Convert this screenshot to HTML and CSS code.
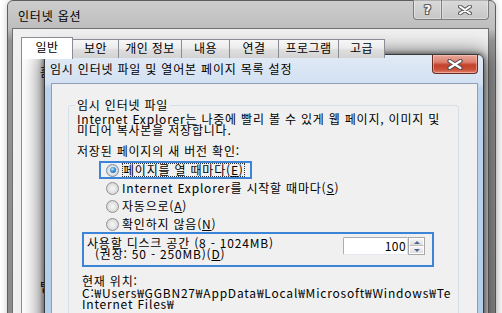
FILE: index.html
```html
<!DOCTYPE html>
<html lang="ko">
<head>
<meta charset="utf-8">
<title>인터넷 옵션</title>
<link rel="stylesheet" href="styles.css">
</head>
<body>
<div class="desk">
  <div class="win outer">
    <div class="titlebar">
      <span class="title">인터넷 옵션</span>
      <div class="caps">
        <div class="cap help"><span class="qmark">?</span></div>
        <div class="cap close">
          <svg width="14" height="10" viewBox="0 0 14 10"><path d="M2 1.5 L12 8.5 M12 1.5 L2 8.5" stroke="#5f5f5f" stroke-width="4" stroke-linecap="round"/><path d="M2 1.5 L12 8.5 M12 1.5 L2 8.5" stroke="#fff" stroke-width="2" stroke-linecap="round"/></svg>
        </div>
      </div>
    </div>
    <div class="client">
      <div class="tabs">
        <div class="tab sel">일반</div>
        <div class="tab">보안</div>
        <div class="tab">개인 정보</div>
        <div class="tab">내용</div>
        <div class="tab">연결</div>
        <div class="tab">프로그램</div>
        <div class="tab">고급</div>
      </div>
      <div class="page">
        <div class="ghost g1">홈</div>
        <div class="ghost g2">탭</div>
      </div>
    </div>
  </div>

  <div class="win dlg">
    <div class="dtitle">
      <span class="dtext">임시 인터넷 파일 및 열어본 페이지 목록 설정</span>
      <div class="dclose">
        <svg width="16" height="11" viewBox="0 0 16 11"><path d="M2.5 2 L13.5 9 M13.5 2 L2.5 9" stroke="#4a4a4a" stroke-width="4.2" stroke-linecap="round"/><path d="M2.5 2 L13.5 9 M13.5 2 L2.5 9" stroke="#fff" stroke-width="2.2" stroke-linecap="round"/></svg>
      </div>
    </div>
    <div class="dclient">
      <fieldset class="group">
        <legend>임시 인터넷 파일</legend>
        <p class="desc">Internet Explorer는 나중에 빨리 볼 수 있게 웹 페이지, 이미지 및<br>미디어 복사본을 저장합니다.</p>
        <div class="q">저장된 페이지의 새 버전 확인:</div>
        <div class="radios">
          <div class="row mark"><span class="radio on"></span><span class="focus">페이지를 열 때마다(<u>E</u>)</span></div>
          <div class="row"><span class="radio"></span><span>Internet Explorer를 시작할 때마다(<u>S</u>)</span></div>
          <div class="row"><span class="radio"></span><span>자동으로(<u>A</u>)</span></div>
          <div class="row"><span class="radio"></span><span>확인하지 않음(<u>N</u>)</span></div>
        </div>
        <div class="disk">
          <div class="disktext">
            <div>사용할 디스크 공간 (8 - 1024MB)</div>
            <div class="rec">(권장: 50 - 250MB)(<u>D</u>)</div>
          </div>
          <div class="spin">
            <div class="spinval">100</div>
            <div class="spinbtns">
              <div class="sb up"><span class="arr"></span></div>
              <div class="sb down"><span class="arr"></span></div>
            </div>
          </div>
        </div>
        <div class="loclabel">현재 위치:</div>
        <div class="path">
          <div>C:₩Users₩GGBN27₩AppData₩Local₩Microsoft₩Windows₩Temporary</div>
          <div>Internet Files₩</div>
        </div>
      </fieldset>
    </div>
  </div>
</div>
</body>
</html>
```

FILE: styles.css
```css
* { box-sizing: border-box; }
html, body { margin: 0; padding: 0; }
body {
  font-family: "Noto Sans CJK KR", "Liberation Sans", sans-serif;
  font-size: 12px;
  letter-spacing: 0.8px;
  color: #000;
  background: #fff;
}
.desk {
  position: relative;
  width: 502px;
  height: 313px;
  overflow: hidden;
  background: #fff;
}
.win { position: absolute; }

/* ---------- outer window ---------- */
.outer {
  left: 7px;
  top: 0;
  width: 489px;
  height: 340px;
  border: 1px solid #5e5e5e;
  border-radius: 6px 6px 0 0;
  background: linear-gradient(to bottom, #cdcdcd 0, #bdbdbd 28px, #939393 40px, #8a8a8a 100%);
  padding: 0 6px 0 4px;
  display: flex;
  flex-direction: column;
  box-shadow: 0 0 7px rgba(0,0,0,.22);
}
.titlebar {
  height: 27px;
  display: flex;
  align-items: flex-start;
  justify-content: space-between;
}
.title {
  padding-left: 6px;
  margin-top: 6px;
  line-height: 18px;
}
.caps {
  display: flex;
  margin-top: -1px;
}
.cap {
  height: 20px;
  border: 1px solid #7c7c7c;
  border-top: none;
  background: linear-gradient(to bottom, rgba(255,255,255,.25), rgba(255,255,255,.05));
  box-shadow: inset 0 0 0 1px rgba(255,255,255,.35);
  display: flex;
  align-items: center;
  justify-content: center;
}
.cap.help { width: 29px; border-radius: 0 0 0 4px; }
.cap.close { width: 48px; margin-left: -1px; border-radius: 0 0 4px 0; }
.qmark {
  font-family: "DejaVu Sans", sans-serif;
  font-weight: bold;
  font-size: 12px;
  line-height: 12px;
  letter-spacing: 0;
  color: #fff;
  text-shadow: 1px 0 0 #5f5f5f, -1px 0 0 #5f5f5f, 0 1px 0 #5f5f5f, 0 -1px 0 #5f5f5f, 1px 1px 0 #5f5f5f, -1px -1px 0 #5f5f5f, 1px -1px 0 #5f5f5f, -1px 1px 0 #5f5f5f;
}
.client {
  flex: 1;
  border: 1px solid #6f6f6f;
  background: #f0f0f0;
  padding: 8px 0 0 8px;
  display: flex;
  flex-direction: column;
}
.tabs {
  display: flex;
  align-items: flex-end;
  height: 21px;
  position: relative;
  z-index: 1;
}
.tab {
  height: 19px;
  border: 1px solid #898c95;
  border-bottom: none;
  margin-left: -1px;
  background: linear-gradient(to bottom, #f7f7f7 0, #ececec 45%, #dedede 55%, #d3d3d3 100%);
  text-align: center;
  line-height: 16px;
  letter-spacing: 0.4px;
}
.tab:nth-child(1) { width: 52px; margin-left: 0; }
.tab:nth-child(2) { width: 47px; }
.tab:nth-child(3) { width: 64px; }
.tab:nth-child(4) { width: 49px; }
.tab:nth-child(5) { width: 50px; }
.tab:nth-child(6) { width: 61px; }
.tab:nth-child(7) { width: 47px; }
.tab.sel {
  height: 22px;
  margin-bottom: -1px;
  background: #fff;
  line-height: 17px;
  position: relative;
  z-index: 2;
}
.page {
  flex: 1;
  width: 460px;
  border: 1px solid #898c95;
  background: #fff;
  padding: 6px 0 0 18px;
}
.ghost { line-height: 14px; }
.g2 { margin-top: 201px; }

/* ---------- dialog ---------- */
.dlg {
  left: 44px;
  top: 54px;
  width: 440px;
  height: 300px;
  border: 1px solid #3a3a3a;
  border-radius: 6px 6px 0 0;
  background: linear-gradient(to bottom, #e1eaf6 0, #d3e1f2 28px, #bcd3ee 34px, #b3cdeb 100%);
  padding: 0 5px 0 6px;
  display: flex;
  flex-direction: column;
  box-shadow: 0 0 5px 1px rgba(0,0,0,.45), 0 2px 20px 4px rgba(0,0,0,.55);
}
.dtitle {
  height: 28px;
  display: flex;
  align-items: flex-start;
  justify-content: space-between;
}
.dtext {
  margin-top: 6px;
  line-height: 16px;
  margin-left: -1px;
}
.dclose {
  width: 46px;
  height: 19px;
  border: 1px solid #6a2a22;
  border-top: none;
  border-radius: 0 0 4px 4px;
  background: linear-gradient(to bottom, #e9a99b 0, #dc7f6c 40%, #c2412a 55%, #cc4f37 80%, #e0826c 100%);
  box-shadow: inset 0 0 0 1px rgba(255,220,210,.45);
  display: flex;
  align-items: center;
  justify-content: center;
}
.dclient {
  flex: 1;
  border: 1px solid #8e9fb5;
  background: #f0f0f0;
  padding: 15px 0 0 16px;
}
.group {
  width: 391px;
  margin: 0;
  padding: 0 0 0 8px;
  min-width: 0;
  border: 1px solid #d5dfe5;
  border-radius: 3px;
  height: 240px;
}
.group legend {
  padding: 0 2px;
  margin-left: -2px;
  line-height: 12px;
}
.desc {
  margin: 2px 0 0;
  line-height: 11px;
  white-space: nowrap;
}
.q {
  margin-top: 9px;
  line-height: 14px;
}
.radios {
  margin-top: 3px;
  display: flex;
  flex-direction: column;
}
.row {
  height: 18px;
  display: flex;
  align-items: center;
  gap: 3px;
  padding-left: 29px;
  line-height: 14px;
  white-space: nowrap;
}
.row.mark {
  width: 153px;
  margin-left: 22px;
  padding-left: 5px;
  border: 2px solid #3b84d8;
}
.focus {
  outline: 1px dotted #333;
  outline-offset: -1px;
  padding: 0 1px;
}
.radio {
  flex: none;
  width: 13px;
  height: 13px;
  border-radius: 50%;
  border: 1px solid #939393;
  background: radial-gradient(circle at 50% 50%, #f6f6f6 0, #e6e6e6 45%, #d6d6d6 70%, #f2f2f2 100%);
  display: flex;
  align-items: center;
  justify-content: center;
}
.radio.on { border-color: #6f8fae; }
.radio.on::after {
  content: "";
  width: 6px;
  height: 6px;
  border-radius: 50%;
  background: radial-gradient(circle at 40% 35%, #bfe6fb 0, #3d93d6 45%, #0c5596 100%);
}
u { text-decoration-thickness: 1px; text-underline-offset: 1px; }
.disk {
  margin: -1px 0 0 5px;
  width: 352px;
  height: 35px;
  border: 2px solid #3b84d8;
  display: flex;
  justify-content: space-between;
  align-items: flex-start;
  padding: 3px 7px 0 3px;
}
.disktext { line-height: 11px; white-space: nowrap; }
.rec { padding-left: 8px; }
.spin {
  display: flex;
  height: 18px;
}
.spinval {
  width: 65px;
  height: 18px;
  border: 1px solid #abadb3;
  border-right-color: #dbdfe6;
  border-bottom-color: #e3e9ef;
  border-radius: 2px 0 0 2px;
  background: #fff;
  text-align: right;
  padding-right: 1px;
  line-height: 15px;
  letter-spacing: 0.4px;
}
.spinbtns {
  width: 17px;
  height: 18px;
  display: flex;
  flex-direction: column;
  border: 1px solid #a8a8a8;
  background: #fff;
}
.sb {
  flex: 1;
  display: flex;
  align-items: center;
  justify-content: center;
  background: linear-gradient(to bottom, #f4f4f4, #dedede);
  border: 1px solid #fff;
}
.sb.up { border-bottom-color: #bdbdbd; }
.arr {
  width: 0;
  height: 0;
  border-left: 3px solid transparent;
  border-right: 3px solid transparent;
}
.up .arr { border-bottom: 3px solid #4c6592; }
.down .arr { border-top: 3px solid #4c6592; }
.loclabel {
  margin: 8px 0 0 5px;
  line-height: 12px;
}
.path {
  margin-left: 5px;
  width: 369px;
  overflow: hidden;
  line-height: 11px;
  white-space: nowrap;
}
```
